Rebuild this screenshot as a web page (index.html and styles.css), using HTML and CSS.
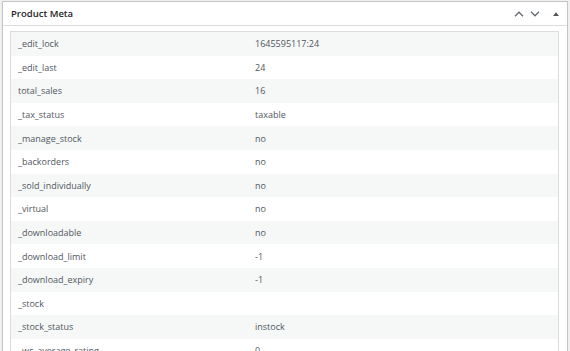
FILE: index.html
```html
<!DOCTYPE html>
<html>
<head>
<meta charset="utf-8">
<link rel="stylesheet" href="styles.css">
</head>
<body>
<div class="postbox">
  <div class="postbox-header">
    <h2 class="title">Product Meta</h2>
    <div class="actions">
      <span class="btn"><svg width="10" height="6" viewBox="0 0 10 6"><path d="M1 5.2 L5 1.2 L9 5.2" fill="none" stroke="#646970" stroke-width="1.3"/></svg></span>
      <span class="btn"><svg width="10" height="6" viewBox="0 0 10 6"><path d="M1 0.8 L5 4.8 L9 0.8" fill="none" stroke="#646970" stroke-width="1.3"/></svg></span>
      <span class="btn btn-toggle"><svg width="6" height="4" viewBox="0 0 6 4"><path d="M0 4 L3 0.3 L6 4 Z" fill="#50575e"/></svg></span>
    </div>
  </div>
  <div class="inside">
    <div class="meta-table">
      <div class="row"><span class="key">_edit_lock</span><span class="val">1645595117:24</span></div>
      <div class="row"><span class="key">_edit_last</span><span class="val">24</span></div>
      <div class="row"><span class="key">total_sales</span><span class="val">16</span></div>
      <div class="row"><span class="key">_tax_status</span><span class="val">taxable</span></div>
      <div class="row"><span class="key">_manage_stock</span><span class="val">no</span></div>
      <div class="row"><span class="key">_backorders</span><span class="val">no</span></div>
      <div class="row"><span class="key">_sold_individually</span><span class="val">no</span></div>
      <div class="row"><span class="key">_virtual</span><span class="val">no</span></div>
      <div class="row"><span class="key">_downloadable</span><span class="val">no</span></div>
      <div class="row"><span class="key">_download_limit</span><span class="val">-1</span></div>
      <div class="row"><span class="key">_download_expiry</span><span class="val">-1</span></div>
      <div class="row"><span class="key">_stock</span><span class="val"></span></div>
      <div class="row"><span class="key">_stock_status</span><span class="val">instock</span></div>
      <div class="row"><span class="key">_wc_average_rating</span><span class="val">0</span></div>
    </div>
  </div>
</div>
</body>
</html>
```

FILE: styles.css
```css
html, body {
  margin: 0;
  padding: 0;
  background: #f0f0f1;
  height: 351px;
  overflow: hidden;
}
body {
  font-family: "Open Sans", "Noto Sans", sans-serif;
  color: #50575e;
}
.postbox {
  margin: 1px 2px 0 2px;
  border: 1px solid #c3c4c7;
  background: #fff;
  box-shadow: 0 1px 1px rgba(0,0,0,0.04);
}
.postbox-header {
  display: flex;
  align-items: center;
  justify-content: space-between;
  height: 23px;
  border-bottom: 1px solid #dcdcde;
}
.title {
  margin: 0;
  padding-left: 8px;
  font-size: 9.5px;
  font-weight: 600;
  color: #1d2327;
}
.actions {
  display: flex;
  align-items: center;
  padding-right: 3px;
}
.btn {
  display: flex;
  align-items: center;
  justify-content: center;
  width: 16px;
  height: 20px;
}
.btn-toggle {
  margin-left: 5px;
}
.inside {
  padding: 5px 8px 0 7px;
}
.meta-table {
  border: 1px solid #dcdcde;
}
.row {
  display: grid;
  grid-template-columns: 244px 1fr;
  height: 23.6px;
  align-items: center;
  font-size: 9px;
}
.row:nth-child(odd) {
  background: #f6f7f7;
}
.key {
  padding-left: 7px;
}
```
